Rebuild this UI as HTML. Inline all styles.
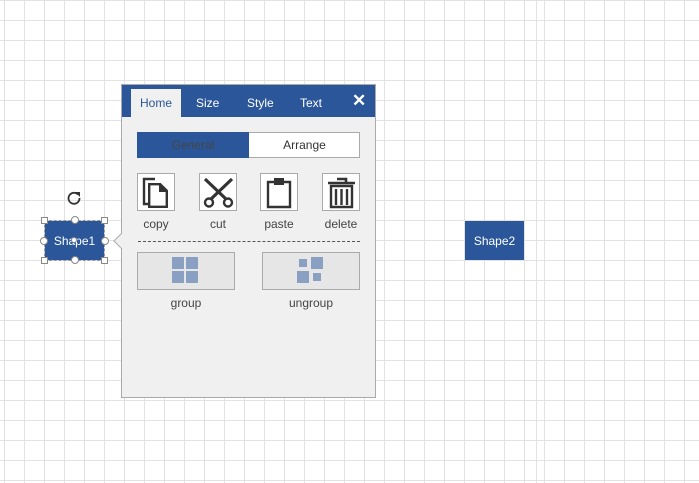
<!DOCTYPE html><html><head><style>
body{margin:0;width:699px;height:483px;overflow:hidden;background:#fff;font-family:"Liberation Sans",sans-serif;position:relative;
background-image:linear-gradient(to right,#e2e2e2 1px,transparent 1px),linear-gradient(to bottom,#e2e2e2 1px,transparent 1px);background-size:20px 20px;background-position:4px 0,0 0}
.a{position:absolute;box-sizing:border-box}
.shape{background:#2b579a;color:#fff;font-size:12px;display:flex;align-items:center;justify-content:center}
.ib{width:38px;height:38px;border:1px solid #aaa;background:#fff}
.ib svg{position:absolute;left:0;top:0}
.lb{font-size:12px;color:#444;text-align:center;width:60px}
.h{width:7px;height:7px;border:1px solid #888;background:#fff}
.c{width:8px;height:8px;border:1px solid #888;background:#fff;border-radius:50%}
</style></head><body>
<div class="a" style="left:536px;top:0;width:1px;height:483px;background:#e2e2e2"></div>
<div class="a shape" style="left:45px;top:221px;width:59px;height:39px">Shape1</div>
<div class="a" style="left:44px;top:220px;width:61px;height:41px;border:1px dashed #999"></div>
<div class="a h" style="left:41px;top:217px"></div><div class="a h" style="left:101px;top:217px"></div>
<div class="a h" style="left:41px;top:257px"></div><div class="a h" style="left:101px;top:257px"></div>
<div class="a c" style="left:71px;top:216px"></div><div class="a c" style="left:71px;top:256px"></div>
<div class="a c" style="left:40px;top:237px"></div><div class="a c" style="left:101px;top:237px"></div>
<div class="a c" style="left:71px;top:237px;width:6px;height:6px"></div>
<svg class="a" style="left:66px;top:190px" width="16" height="16" viewBox="0 0 16 16"><path d="M12 4.5A5.5 5.5 0 1 0 13.5 8" fill="none" stroke="#333" stroke-width="1.8"/><path d="M9 2h5v5z" fill="#333"/></svg>
<div class="a shape" style="left:465px;top:221px;width:59px;height:39px">Shape2</div>
<div class="a" style="left:121px;top:84px;width:255px;height:314px;border:1px solid #aaa;background:#f0f0f0"></div>
<svg class="a" style="left:113px;top:233px" width="10" height="16"><path d="M9 0L1 8L9 16" fill="#f0f0f0" stroke="#aaa"/></svg>
<div class="a" style="left:122px;top:85px;width:253px;height:32px;background:#2b579a"></div>
<div class="a" style="left:131px;top:89px;width:50px;height:28px;background:#f0f0f0;color:#2b579a;font-size:12px;text-align:center;line-height:29px">Home</div>
<div class="a" style="left:196px;top:89px;color:#fff;font-size:12px;line-height:29px">Size</div>
<div class="a" style="left:247px;top:89px;color:#fff;font-size:12px;line-height:29px">Style</div>
<div class="a" style="left:300px;top:89px;color:#fff;font-size:12px;line-height:29px">Text</div>
<div class="a" style="left:352px;top:89px;color:#fff;font-size:17px;font-weight:bold;line-height:24px">✕</div>
<div class="a" style="left:137px;top:132px;width:223px;height:26px;border:1px solid #aaa;background:#fff"></div>
<div class="a" style="left:137px;top:132px;width:112px;height:26px;background:#2b579a;color:#444;font-size:12px;text-align:center;line-height:26px">General</div>
<div class="a" style="left:249px;top:132px;width:111px;height:26px;color:#333;font-size:12px;text-align:center;line-height:26px">Arrange</div>
<div class="a ib" style="left:137px;top:173px"><svg width="38" height="38" viewBox="0 0 38 38"><path d="M10 30H6V5h11" fill="none" stroke="#333" stroke-width="2.4"/><path d="M11.2 10.2h11l6.6 6.6v16H11.2z" fill="none" stroke="#333" stroke-width="2.4"/><path d="M21 9v9h9z" fill="#333"/></svg></div>
<div class="a ib" style="left:199px;top:173px"><svg width="38" height="38" viewBox="0 0 38 38"><path d="M5 5l21 20M32 5L11 25" stroke="#333" stroke-width="3.2"/><circle cx="9" cy="28.5" r="4" fill="#fff" stroke="#333" stroke-width="2.4"/><circle cx="28" cy="28.5" r="4" fill="#fff" stroke="#333" stroke-width="2.4"/></svg></div>
<div class="a ib" style="left:260px;top:173px"><svg width="38" height="38" viewBox="0 0 38 38"><path d="M7 8h22v25H7z" fill="none" stroke="#333" stroke-width="2.4"/><path d="M13 4h10v7H13z" fill="#333"/></svg></div>
<div class="a ib" style="left:322px;top:173px"><svg width="38" height="38" viewBox="0 0 38 38"><path d="M5 9h27M14 5h9v4" fill="none" stroke="#333" stroke-width="2.6"/><path d="M8 12h21v21H8z M13 15v16M18.5 15v16M24 15v16" fill="none" stroke="#333" stroke-width="2.4"/></svg></div>
<div class="a lb" style="left:126px;top:217px">copy</div>
<div class="a lb" style="left:188px;top:217px">cut</div>
<div class="a lb" style="left:249px;top:217px">paste</div>
<div class="a lb" style="left:311px;top:217px">delete</div>
<div class="a" style="left:138px;top:241px;width:222px;border-top:1px dashed #555"></div>
<div class="a" style="left:137px;top:252px;width:98px;height:38px;border:1px solid #aaa;background:#e6e6e6"></div>
<div class="a" style="left:262px;top:252px;width:98px;height:38px;border:1px solid #aaa;background:#e6e6e6"></div>
<svg class="a" style="left:172px;top:257px" width="26" height="26"><g fill="#8aa0c2"><rect x="0" y="0" width="12" height="12"/><rect x="14" y="0" width="12" height="12"/><rect x="0" y="14" width="12" height="12"/><rect x="14" y="14" width="12" height="12"/></g></svg>
<svg class="a" style="left:297px;top:257px" width="26" height="26"><g fill="#8aa0c2"><rect x="2" y="2" width="8" height="8"/><rect x="14" y="0" width="12" height="12"/><rect x="0" y="14" width="12" height="12"/><rect x="16" y="16" width="8" height="8"/></g></svg>
<div class="a" style="left:137px;top:296px;width:98px;text-align:center;font-size:12px;color:#444">group</div>
<div class="a" style="left:262px;top:296px;width:98px;text-align:center;font-size:12px;color:#444">ungroup</div>
</body></html>
